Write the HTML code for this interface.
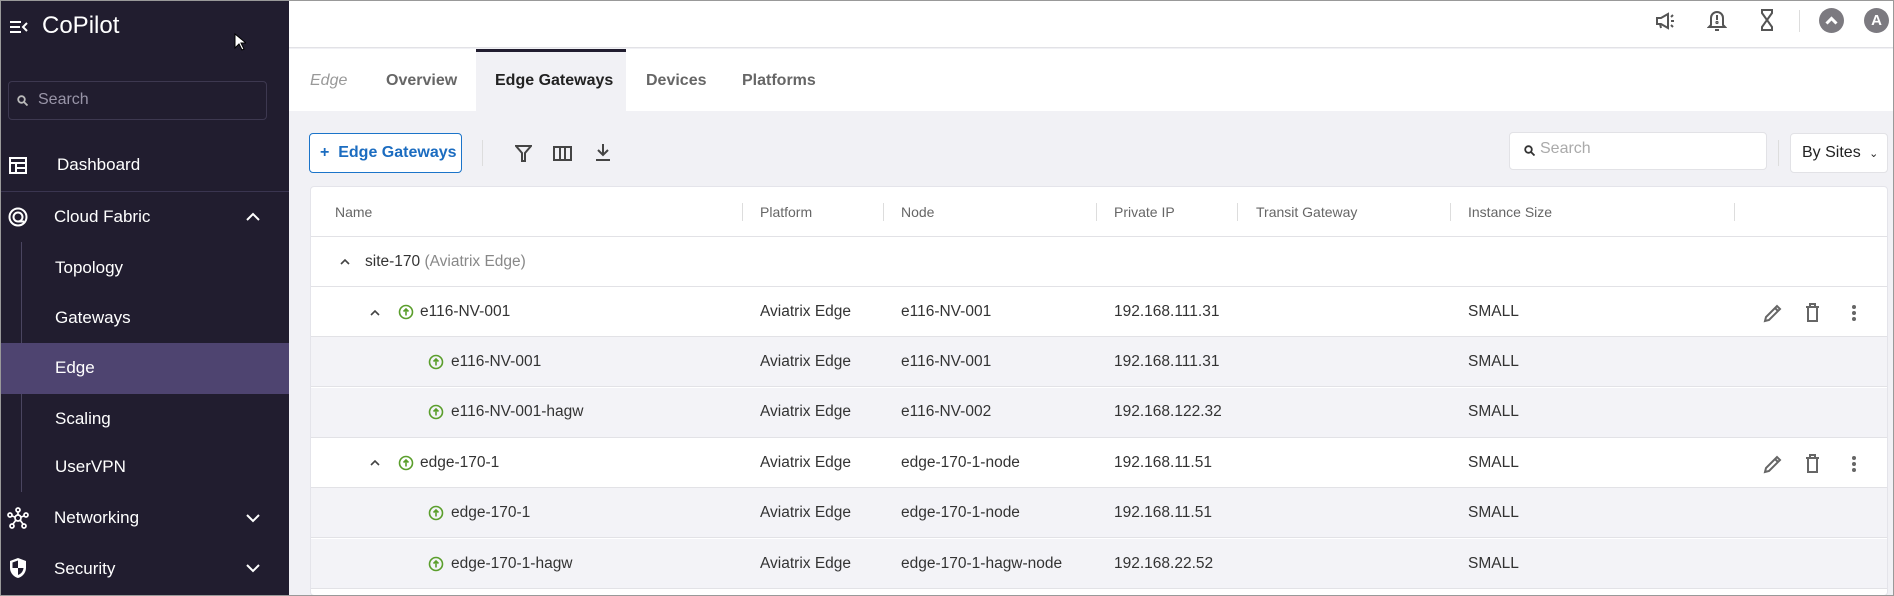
<!DOCTYPE html>
<html><head><meta charset="utf-8"><style>
*{box-sizing:border-box;margin:0;padding:0}
body{width:1894px;height:596px;overflow:hidden;font-family:"Liberation Sans",sans-serif;background:#f1f1f5;position:relative;color:#333}
.a{position:absolute}
#sb{left:0;top:0;width:289px;height:596px;background:#211d2f;color:#fff}
.nav{position:absolute;font-size:17px;color:#fff;transform:translateY(-50%)}
.hdr{left:289px;top:0;width:1605px;height:48px;background:#fff;border-bottom:1px solid #e2e2e6}
.tabs{left:289px;top:49px;width:1605px;height:62px;background:#fff}
.tab{position:absolute;top:81px;transform:translateY(-50%);font-size:16px;font-weight:bold;color:#666}
.card{left:310px;top:186px;width:1578px;height:410px;background:#fff;border:1px solid #e4e4ea;border-radius:4px}
.row{position:absolute;left:311px;width:1576px;height:50px;border-bottom:1px solid #e2e2e6}
.t{position:absolute;transform:translateY(-50%);font-size:15.5px;color:#333;white-space:nowrap}
.h{position:absolute;transform:translateY(-50%);font-size:14px;color:#666}
.sep{position:absolute;top:203px;width:1px;height:18px;background:#ddd}
</style></head><body>
<div class="a" style="left:0;top:0;width:1894px;height:596px;border:1px solid #999;z-index:9;pointer-events:none"></div>
<div id="sb" class="a">
 <svg class="a" style="left:9px;top:19px" width="20" height="16" viewBox="0 0 20 16" fill="none" stroke="#fff" stroke-width="2"><path d="M1 3h11M1 8h10M1 13h11M18 4l-4 4 4 4"/></svg>
 <div class="a" style="left:42px;top:12px;font-size:24px;color:#fff">CoPilot</div>
 <svg class="a" style="left:234px;top:33px" width="12" height="18" viewBox="0 0 12 18"><path d="M1 1v14l4-4 3 6 2-1-3-6h5z" fill="#fff" stroke="#000" stroke-width="1"/></svg>
 <div class="a" style="left:8px;top:81px;width:259px;height:39px;border:1px solid #3d3850;border-radius:4px"></div>
 <svg class="a" style="left:17px;top:95px" width="11" height="11" viewBox="0 0 11 11" fill="none" stroke="#bbb" stroke-width="1.8"><circle cx="4.5" cy="4.5" r="3.3"/><path d="M7 7l3.5 3.5"/></svg>
 <div class="a" style="left:38px;top:91px;font-size:16px;color:#9995a8">Search</div>
 <svg class="a" style="left:9px;top:157px" width="18" height="17" viewBox="0 0 18 17" fill="none" stroke="#fff" stroke-width="2"><rect x="1" y="1" width="16" height="15"/><path d="M1 6h16M7 6v10M7 11h10"/></svg>
 <div class="nav" style="left:57px;top:165px">Dashboard</div>
 <div class="a" style="left:0;top:191px;width:289px;height:1px;background:#3a3550"></div>
 <svg class="a" style="left:8px;top:206px" width="20" height="22" viewBox="0 0 20 22" fill="none" stroke="#fff" stroke-width="2"><circle cx="10" cy="11" r="8.5"/><circle cx="10" cy="11" r="4.5"/><path d="M10 15.5h6"/></svg>
 <div class="nav" style="left:54px;top:217px">Cloud Fabric</div>
 <svg class="a" style="left:246px;top:212px" width="14" height="9" viewBox="0 0 14 9" fill="none" stroke="#fff" stroke-width="2"><path d="M1 8l6-6 6 6"/></svg>
 <div class="a" style="left:21px;top:242px;width:1px;height:250px;background:#4a4560"></div>
 <div class="a" style="left:1px;top:343px;width:288px;height:51px;background:#4e4470"></div>
 <div class="nav" style="left:55px;top:268px">Topology</div>
 <div class="nav" style="left:55px;top:318px">Gateways</div>
 <div class="nav" style="left:55px;top:368px">Edge</div>
 <div class="nav" style="left:55px;top:419px">Scaling</div>
 <div class="nav" style="left:55px;top:467px">UserVPN</div>
 <svg class="a" style="left:7px;top:507px" width="22" height="22" viewBox="0 0 22 22" fill="none" stroke="#fff" stroke-width="1.7"><circle cx="11" cy="11" r="3"/><circle cx="11" cy="3" r="2"/><circle cx="3" cy="8" r="2"/><circle cx="19" cy="8" r="2"/><circle cx="5" cy="19" r="2"/><circle cx="17" cy="19" r="2"/><path d="M11 5v3M5 9l3 1M17 9l-3 1M6 17l3-4M16 17l-3-4"/></svg>
 <div class="nav" style="left:54px;top:518px">Networking</div>
 <svg class="a" style="left:246px;top:514px" width="14" height="9" viewBox="0 0 14 9" fill="none" stroke="#fff" stroke-width="2"><path d="M1 1l6 6 6-6"/></svg>
 <svg class="a" style="left:9px;top:557px" width="18" height="22" viewBox="0 0 18 22"><path d="M9 1l8 3v7c0 5-4 9-8 10C5 20 1 16 1 11V4z" fill="#fff"/><path d="M9 4v7H3.5V5.5L9 3.5zM9 11h5.5c-.3 3.5-2.7 6-5.5 7z" fill="#211d2f"/></svg>
 <div class="nav" style="left:54px;top:569px">Security</div>
 <svg class="a" style="left:246px;top:564px" width="14" height="9" viewBox="0 0 14 9" fill="none" stroke="#fff" stroke-width="2"><path d="M1 1l6 6 6-6"/></svg>
</div>

<div class="a hdr"></div>
<svg class="a" style="left:1655px;top:12px" width="22" height="18" viewBox="0 0 22 18" fill="none" stroke="#555" stroke-width="2"><path d="M2 6h4l7-4v14l-7-4H2zM5 12l1 4"/><path d="M16 5l2-2M16 9h3M16 13l2 2"/></svg>
<svg class="a" style="left:1707px;top:8px" width="20" height="24" viewBox="0 0 20 24" fill="none" stroke="#555" stroke-width="2"><path d="M4 17V10a6 6 0 0112 0v7l2 2H2z"/><path d="M10 7v5"/><circle cx="10" cy="14.5" r=".6"/><path d="M8 22h4"/></svg>
<svg class="a" style="left:1759px;top:9px" width="16" height="22" viewBox="0 0 16 22" fill="none" stroke="#555" stroke-width="2"><path d="M2 1h12M2 21h12M3 1v3l5 7-5 7v3M13 1v3l-5 7 5 7v3"/></svg>
<div class="a" style="left:1799px;top:10px;width:1px;height:22px;background:#ddd"></div>
<div class="a" style="left:1819px;top:8px;width:25px;height:25px;border-radius:50%;background:#7c7a80"></div>
<svg class="a" style="left:1825px;top:16px" width="13" height="9" viewBox="0 0 13 9" fill="none" stroke="#fff" stroke-width="3"><path d="M1.5 7.5l5-5 5 5"/></svg>
<div class="a" style="left:1864px;top:8px;width:25px;height:25px;border-radius:50%;background:#7c7a80;color:#fff;font-weight:bold;font-size:15px;text-align:center;line-height:25px">A</div>

<div class="a tabs"></div>
<div class="a" style="left:476px;top:49px;width:150px;height:62px;background:#f1f1f5;border-top:3px solid #211d2f"></div>
<div class="tab" style="left:310px;font-weight:normal;font-style:italic;color:#999">Edge</div>
<div class="tab" style="left:386px">Overview</div>
<div class="tab" style="left:495px;color:#222">Edge Gateways</div>
<div class="tab" style="left:646px">Devices</div>
<div class="tab" style="left:742px">Platforms</div>

<div class="a" style="left:309px;top:133px;width:153px;height:40px;border:1px solid #1b74c9;border-radius:4px;background:#fff;color:#1b6cc0;font-size:16px;font-weight:bold;line-height:38px;padding-left:10px">+&nbsp; Edge Gateways</div>
<div class="a" style="left:482px;top:140px;width:1px;height:26px;background:#ddd"></div>
<svg class="a" style="left:515px;top:145px" width="17" height="17" viewBox="0 0 17 17" fill="none" stroke="#444" stroke-width="2"><path d="M1 1h15l-6 7v8H7V8z"/></svg>
<svg class="a" style="left:553px;top:146px" width="19" height="15" viewBox="0 0 19 15" fill="none" stroke="#444" stroke-width="2"><rect x="1" y="1" width="17" height="13"/><path d="M7 1v13M12 1v13"/></svg>
<svg class="a" style="left:595px;top:143px" width="16" height="19" viewBox="0 0 16 19" fill="none" stroke="#444" stroke-width="2"><path d="M8 1v11M3 7l5 5 5-5M1 17h14"/></svg>

<div class="a" style="left:1509px;top:132px;width:258px;height:38px;background:#fff;border:1px solid #e2e2e6;border-radius:4px"></div>
<svg class="a" style="left:1524px;top:145px" width="11" height="11" viewBox="0 0 11 11" fill="none" stroke="#333" stroke-width="1.8"><circle cx="4.5" cy="4.5" r="3.3"/><path d="M7 7l3.5 3.5"/></svg>
<div class="a" style="left:1540px;top:140px;font-size:16px;color:#aaa">Search</div>
<div class="a" style="left:1778px;top:140px;width:1px;height:26px;background:#ddd"></div>
<div class="a" style="left:1790px;top:133px;width:98px;height:40px;background:#fff;border:1px solid #e2e2e6;border-radius:4px;font-size:16px;line-height:38px;padding-left:11px;color:#222">By Sites <span style="font-size:11px;margin-left:4px">&#8964;</span></div>

<div class="a card"></div>
<div class="row" style="top:187px;height:50px"></div>
<div class="h" style="left:335px;top:212px">Name</div>
<div class="h" style="left:760px;top:212px">Platform</div>
<div class="h" style="left:901px;top:212px">Node</div>
<div class="h" style="left:1114px;top:212px">Private IP</div>
<div class="h" style="left:1256px;top:212px">Transit Gateway</div>
<div class="h" style="left:1468px;top:212px">Instance Size</div>
<div class="sep" style="left:742px"></div><div class="sep" style="left:883px"></div><div class="sep" style="left:1096px"></div><div class="sep" style="left:1237px"></div><div class="sep" style="left:1450px"></div><div class="sep" style="left:1734px"></div>

<div class="row" style="top:237px;background:#fff"></div>
<div class="row" style="top:287px;background:#fff"></div>
<div class="row" style="top:337px;background:#f3f3f7"></div>
<div class="row" style="top:388px;background:#f3f3f7"></div>
<div class="row" style="top:438px;background:#fff"></div>
<div class="row" style="top:488px;background:#f3f3f7"></div>
<div class="row" style="top:539px;background:#f3f3f7"></div>

<svg class="a" style="left:340px;top:258px" width="10" height="7" viewBox="0 0 10 7" fill="none" stroke="#444" stroke-width="1.6"><path d="M1 6l4-4 4 4"/></svg>
<div class="t" style="left:365px;top:262px">site-170 <span style="color:#888">(Aviatrix Edge)</span></div>

<svg class="a" style="left:370px;top:309px" width="10" height="7" viewBox="0 0 10 7" fill="none" stroke="#444" stroke-width="1.6"><path d="M1 6l4-4 4 4"/></svg>
<svg class="a" style="left:398px;top:304px" width="16" height="16" viewBox="0 0 16 16" fill="none" stroke="#5a9e2b" stroke-width="1.6"><circle cx="8" cy="8" r="6.5"/><path d="M8 11.5V5M5.5 7.5L8 5l2.5 2.5"/></svg>
<div class="t" style="left:420px;top:312px">e116-NV-001</div>

<svg class="a" style="left:428px;top:354px" width="16" height="16" viewBox="0 0 16 16" fill="none" stroke="#5a9e2b" stroke-width="1.6"><circle cx="8" cy="8" r="6.5"/><path d="M8 11.5V5M5.5 7.5L8 5l2.5 2.5"/></svg>
<div class="t" style="left:451px;top:362px">e116-NV-001</div>
<svg class="a" style="left:428px;top:404px" width="16" height="16" viewBox="0 0 16 16" fill="none" stroke="#5a9e2b" stroke-width="1.6"><circle cx="8" cy="8" r="6.5"/><path d="M8 11.5V5M5.5 7.5L8 5l2.5 2.5"/></svg>
<div class="t" style="left:451px;top:412px">e116-NV-001-hagw</div>

<svg class="a" style="left:370px;top:459px" width="10" height="7" viewBox="0 0 10 7" fill="none" stroke="#444" stroke-width="1.6"><path d="M1 6l4-4 4 4"/></svg>
<svg class="a" style="left:398px;top:455px" width="16" height="16" viewBox="0 0 16 16" fill="none" stroke="#5a9e2b" stroke-width="1.6"><circle cx="8" cy="8" r="6.5"/><path d="M8 11.5V5M5.5 7.5L8 5l2.5 2.5"/></svg>
<div class="t" style="left:420px;top:463px">edge-170-1</div>
<svg class="a" style="left:428px;top:505px" width="16" height="16" viewBox="0 0 16 16" fill="none" stroke="#5a9e2b" stroke-width="1.6"><circle cx="8" cy="8" r="6.5"/><path d="M8 11.5V5M5.5 7.5L8 5l2.5 2.5"/></svg>
<div class="t" style="left:451px;top:513px">edge-170-1</div>
<svg class="a" style="left:428px;top:556px" width="16" height="16" viewBox="0 0 16 16" fill="none" stroke="#5a9e2b" stroke-width="1.6"><circle cx="8" cy="8" r="6.5"/><path d="M8 11.5V5M5.5 7.5L8 5l2.5 2.5"/></svg>
<div class="t" style="left:451px;top:564px">edge-170-1-hagw</div>

<div class="t" style="left:760px;top:312px">Aviatrix Edge</div><div class="t" style="left:901px;top:312px">e116-NV-001</div><div class="t" style="left:1114px;top:312px">192.168.111.31</div><div class="t" style="left:1468px;top:312px">SMALL</div>
<div class="t" style="left:760px;top:362px">Aviatrix Edge</div><div class="t" style="left:901px;top:362px">e116-NV-001</div><div class="t" style="left:1114px;top:362px">192.168.111.31</div><div class="t" style="left:1468px;top:362px">SMALL</div>
<div class="t" style="left:760px;top:412px">Aviatrix Edge</div><div class="t" style="left:901px;top:412px">e116-NV-002</div><div class="t" style="left:1114px;top:412px">192.168.122.32</div><div class="t" style="left:1468px;top:412px">SMALL</div>
<div class="t" style="left:760px;top:463px">Aviatrix Edge</div><div class="t" style="left:901px;top:463px">edge-170-1-node</div><div class="t" style="left:1114px;top:463px">192.168.11.51</div><div class="t" style="left:1468px;top:463px">SMALL</div>
<div class="t" style="left:760px;top:513px">Aviatrix Edge</div><div class="t" style="left:901px;top:513px">edge-170-1-node</div><div class="t" style="left:1114px;top:513px">192.168.11.51</div><div class="t" style="left:1468px;top:513px">SMALL</div>
<div class="t" style="left:760px;top:564px">Aviatrix Edge</div><div class="t" style="left:901px;top:564px">edge-170-1-hagw-node</div><div class="t" style="left:1114px;top:564px">192.168.22.52</div><div class="t" style="left:1468px;top:564px">SMALL</div>

<svg class="a" style="left:1763px;top:303px" width="20" height="20" viewBox="0 0 20 20" fill="none" stroke="#666" stroke-width="2"><path d="M2 18l1-4L14 3l3 3L6 17zM12 5l3 3"/></svg>
<svg class="a" style="left:1805px;top:303px" width="15" height="19" viewBox="0 0 15 19" fill="none" stroke="#666" stroke-width="2"><path d="M1 4h13M5 4V1h5v3M3 4v14h9V4"/></svg>
<svg class="a" style="left:1851px;top:304px" width="6" height="18" viewBox="0 0 6 18" fill="#666"><circle cx="3" cy="3" r="2"/><circle cx="3" cy="9" r="2"/><circle cx="3" cy="15" r="2"/></svg>
<svg class="a" style="left:1763px;top:454px" width="20" height="20" viewBox="0 0 20 20" fill="none" stroke="#666" stroke-width="2"><path d="M2 18l1-4L14 3l3 3L6 17zM12 5l3 3"/></svg>
<svg class="a" style="left:1805px;top:454px" width="15" height="19" viewBox="0 0 15 19" fill="none" stroke="#666" stroke-width="2"><path d="M1 4h13M5 4V1h5v3M3 4v14h9V4"/></svg>
<svg class="a" style="left:1851px;top:455px" width="6" height="18" viewBox="0 0 6 18" fill="#666"><circle cx="3" cy="3" r="2"/><circle cx="3" cy="9" r="2"/><circle cx="3" cy="15" r="2"/></svg>
</body></html>
